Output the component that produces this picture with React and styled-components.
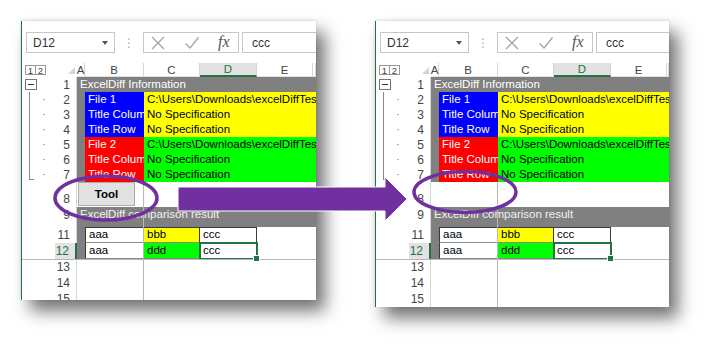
import styled, { createGlobalStyle } from "styled-components";

const GREEN = "#217346";
const PURPLE = "#7030a0";
const GRAY = "#808080";
const COLS = "33px 22px 8px 59px 56px 57px 56px 1fr";

const GlobalStyle = createGlobalStyle`
  body {
    margin: 0;
    background: #fff;
    font-family: "Liberation Sans", Arial, sans-serif;
  }
`;

const Stage = styled.div`
  position: relative;
  width: 711px;
  height: 349px;
  overflow: hidden;
  box-sizing: border-box;
  padding: 21px 0 0 21px;
  display: flex;
  align-items: flex-start;
  gap: 59px;
`;

const Window = styled.div`
  width: ${(p) => p.$w}px;
  height: ${(p) => p.$h}px;
  box-sizing: border-box;
  background: #fff;
  border-left: 1px solid ${GREEN};
  box-shadow: 9px 11px 16px rgba(0, 0, 0, 0.55), 0 -1px 3px rgba(0, 0, 0, 0.12);
  overflow: hidden;
  display: flex;
  flex-direction: column;
  flex-shrink: 0;
`;

/* formula bar */
const FormulaBar = styled.div`
  flex: 0 0 42px;
  height: 42px;
  box-sizing: border-box;
  padding: 11px 0 0 4px;
  display: flex;
  align-items: flex-start;
`;

const Box = styled.div`
  height: 21px;
  box-sizing: border-box;
  border: 1px solid #c6c6c6;
  display: flex;
  align-items: center;
  font-size: 12px;
  color: #333;
`;

const NameBox = styled(Box)`
  width: 89px;
  justify-content: space-between;
  padding: 0 6px;
`;

const Caret = styled.span`
  width: 0;
  height: 0;
  border-left: 3px solid transparent;
  border-right: 3px solid transparent;
  border-top: 4px solid #555;
`;

const Grip = styled.div`
  width: 28px;
  height: 21px;
  display: flex;
  align-items: center;
  justify-content: center;
  color: #aaa;
  font: 12px "DejaVu Sans", sans-serif;
`;

const FxBox = styled(Box)`
  width: 96px;
  padding-left: 6px;
  gap: 18px;
`;

const Fx = styled.span`
  font: italic 16px "Liberation Serif", serif;
  color: #555;
  margin-top: -2px;
`;

const FormulaInput = styled(Box)`
  flex: 1;
  margin-left: 3px;
  padding-left: 9px;
  border-right: none;
`;

/* sheet */
const Sheet = styled.div`
  position: relative;
  flex: 0 0 auto;
`;

const SheetRow = styled.div`
  display: grid;
  grid-template-columns: ${COLS};
  height: ${(p) => p.$h}px;
`;

const ColHead = styled.div`
  display: flex;
  align-items: center;
  justify-content: center;
  font-size: 11.5px;
  color: ${(p) => (p.$active ? GREEN : "#444")};
  background: ${(p) => (p.$active ? "#e2e2e2" : "#fff")};
  box-sizing: border-box;
  border-right: 1px solid #d6d6d6;
  border-bottom: ${(p) => (p.$active ? `2px solid ${GREEN}` : "1px solid #e2e2e2")};
`;

const Corner = styled.div`
  position: relative;
  &::after {
    content: "";
    position: absolute;
    right: 2px;
    bottom: 3px;
    border-left: 7px solid transparent;
    border-bottom: 7px solid #d6d6d6;
  }
`;

const LevelButtons = styled.div`
  display: flex;
  padding: 2px 0 0 3px;
`;

const Level = styled.span`
  width: 11px;
  height: 10px;
  box-sizing: border-box;
  border: 1px solid #999;
  margin-right: -1px;
  display: flex;
  align-items: center;
  justify-content: center;
  font-size: 9.5px;
  color: #444;
`;

const OutlineCell = styled.div`
  position: relative;
  &::before {
    content: "";
    display: ${(p) => (p.$line ? "block" : "none")};
    position: absolute;
    left: 7px;
    top: 0;
    bottom: ${(p) => (p.$end ? 2 : 0)}px;
    width: ${(p) => (p.$end ? 4 : 0)}px;
    border-left: 1px solid #888;
    border-bottom: ${(p) => (p.$end ? "1px solid #888" : "none")};
  }
  &::after {
    content: "${(p) => (p.$dot ? "·" : "")}";
    position: absolute;
    left: 20px;
    top: 1px;
    font-size: 11px;
    color: #777;
  }
`;

const Minus = styled.span`
  position: absolute;
  left: 3px;
  top: 2px;
  width: 12px;
  height: 11px;
  box-sizing: border-box;
  border: 1px solid #777;
  display: flex;
  align-items: center;
  justify-content: center;
  &::before {
    content: "";
    width: 6px;
    height: 1px;
    background: #333;
  }
`;

const RowNum = styled.div`
  display: flex;
  justify-content: flex-end;
  align-items: ${(p) => (p.$bottom ? "flex-end" : "center")};
  padding-right: 6px;
  padding-bottom: ${(p) => (p.$bottom ? 1 : 0)}px;
  box-sizing: border-box;
  overflow: hidden;
  font-size: 12px;
  line-height: 14px;
  color: ${(p) => (p.$active ? GREEN : "#444")};
  background: ${(p) => (p.$active ? "#e2e2e2" : "#fff")};
  border-right: ${(p) => (p.$active ? `2px solid ${GREEN}` : "1px solid #d6d6d6")};
`;

const Cell = styled.div`
  grid-column: ${(p) => p.$col || "auto"};
  background: ${(p) => p.$bg || "transparent"};
  color: ${(p) => p.$fg || "#000"};
  font-size: 11.5px;
  line-height: 1;
  display: flex;
  align-items: ${(p) => (p.$top ? "flex-start" : "center")};
  padding-left: ${(p) => p.$pad ?? 3}px;
  box-sizing: border-box;
  white-space: nowrap;
  overflow: hidden;
  min-width: 0;
`;

const DataCell = styled(Cell)`
  border-right: 1px solid #3a3a3a;
  border-bottom: 1px solid #8a8a8a;
  border-top: ${(p) => (p.$first ? "1px solid #3a3a3a" : "none")};
  border-left: ${(p) => (p.$left ? "1px solid #3a3a3a" : "none")};
`;

const Selected = styled(DataCell)`
  position: relative;
  overflow: visible;
  outline: 2px solid ${GREEN};
  outline-offset: -1px;
  &::after {
    content: "";
    position: absolute;
    z-index: 2;
    right: -4px;
    bottom: -4px;
    width: 5px;
    height: 5px;
    background: ${GREEN};
    border: 1px solid #fff;
  }
`;

const ToolButton = styled.button`
  width: 57px;
  height: 24px;
  margin-left: 1px;
  padding: 0;
  background: #e1e1e1;
  border: 1px solid #adadad;
  font: bold 11.5px "Liberation Sans", Arial, sans-serif;
  color: #000;
`;

const FreezeV = styled.div`
  position: absolute;
  left: 121px;
  top: 119px;
  bottom: 0;
  width: 1px;
  background: #b8b8b8;
`;

const FreezeH = styled.div`
  position: absolute;
  left: 0;
  right: 0;
  top: 196px;
  height: 1px;
  background: #b8b8b8;
`;

const Overlay = styled.svg`
  position: absolute;
  left: 0;
  top: 0;
  pointer-events: none;
`;

const XIcon = () => (
  <svg width="16" height="16" viewBox="0 0 16 16">
    <path d="M2 2 L14 14 M14 2 L2 14" stroke="#a6a6a6" strokeWidth="1.4" fill="none" />
  </svg>
);

const CheckIcon = () => (
  <svg width="16" height="16" viewBox="0 0 16 16">
    <path d="M1.5 8.5 L6 13 L14.5 2.5" stroke="#a6a6a6" strokeWidth="1.4" fill="none" />
  </svg>
);

const path = "C:\\Users\\Downloads\\excelDiffTest\\sample.xlsx";

const infoRows = [
  { n: 2, label: "File 1", value: path, side: "#0000ff", body: "#ffff00" },
  { n: 3, label: "Title Column", value: "No Specification", side: "#0000ff", body: "#ffff00" },
  { n: 4, label: "Title Row", value: "No Specification", side: "#0000ff", body: "#ffff00" },
  { n: 5, label: "File 2", value: path, side: "#ff0000", body: "#00ff00" },
  { n: 6, label: "Title Column", value: "No Specification", side: "#ff0000", body: "#00ff00" },
  { n: 7, label: "Title Row", value: "No Specification", side: "#ff0000", body: "#00ff00" },
];

const ExcelWindow = ({ w, h, showTool }) => (
  <Window $w={w} $h={h}>
    <FormulaBar>
      <NameBox>
        D12
        <Caret />
      </NameBox>
      <Grip>⋮</Grip>
      <FxBox>
        <XIcon />
        <CheckIcon />
        <Fx>fx</Fx>
      </FxBox>
      <FormulaInput>ccc</FormulaInput>
    </FormulaBar>

    <Sheet>
      <SheetRow $h={14}>
        <LevelButtons>
          <Level>1</Level>
          <Level>2</Level>
        </LevelButtons>
        <Corner />
        <ColHead>A</ColHead>
        <ColHead>B</ColHead>
        <ColHead>C</ColHead>
        <ColHead $active>D</ColHead>
        <ColHead>E</ColHead>
        <ColHead />
      </SheetRow>

      <SheetRow $h={15}>
        <OutlineCell>
          <Minus />
        </OutlineCell>
        <RowNum>1</RowNum>
        <Cell $col="3 / -1" $bg={GRAY} $fg="#fff">
          ExcelDiff Information
        </Cell>
      </SheetRow>

      {infoRows.map((r) => (
        <SheetRow $h={15} key={r.n}>
          <OutlineCell $line $dot $end={r.n === 7} />
          <RowNum>{r.n}</RowNum>
          <Cell $bg={GRAY} />
          <Cell $bg={r.side} $fg="#fff">
            {r.label}
          </Cell>
          <Cell $col="5 / -1" $bg={r.body}>
            {r.value}
          </Cell>
        </SheetRow>
      ))}

      <SheetRow $h={25}>
        <OutlineCell />
        <RowNum $bottom>8</RowNum>
        <Cell $col="3 / 5" $pad={0} $top>
          {showTool && <ToolButton>Tool</ToolButton>}
        </Cell>
        <Cell $col="5 / -1" />
      </SheetRow>

      <SheetRow $h={16}>
        <OutlineCell />
        <RowNum>9</RowNum>
        <Cell $col="3 / -1" $bg={GRAY} $fg="#f2f2f2">
          ExcelDiff comparison result
        </Cell>
      </SheetRow>

      <SheetRow $h={4}>
        <OutlineCell />
        <RowNum $bottom>10</RowNum>
        <Cell $col="3 / -1" $bg={GRAY} />
      </SheetRow>

      <SheetRow $h={16}>
        <OutlineCell />
        <RowNum>11</RowNum>
        <Cell $bg={GRAY} />
        <DataCell $first $left $bg="#fff">aaa</DataCell>
        <DataCell $first $bg="#ffff00">bbb</DataCell>
        <DataCell $first $bg="#fff">ccc</DataCell>
        <Cell $col="7 / -1" />
      </SheetRow>

      <SheetRow $h={16}>
        <OutlineCell />
        <RowNum $active>12</RowNum>
        <Cell $bg={GRAY} />
        <DataCell $left $bg="#fff">aaa</DataCell>
        <DataCell $bg="#00ff00">ddd</DataCell>
        <Selected $bg="#fff">ccc</Selected>
        <Cell $col="7 / -1" />
      </SheetRow>

      {[13, 14, 15].map((n) => (
        <SheetRow $h={16} key={n}>
          <OutlineCell />
          <RowNum>{n}</RowNum>
          <Cell $col="3 / -1" />
        </SheetRow>
      ))}

      <FreezeV />
      <FreezeH />
    </Sheet>
  </Window>
);

const App = () => (
  <>
    <GlobalStyle />
    <Stage>
      <ExcelWindow w={295} h={279} showTool />
      <ExcelWindow w={294} h={286} />

      <Overlay width="711" height="349" viewBox="0 0 711 349">
        <polygon
          points="178,187 385,187 385,177 407,199 385,221 385,211 178,211"
          fill={PURPLE}
          stroke="#fff"
          strokeWidth="1"
        />
        <ellipse cx="106" cy="198" rx="51" ry="22" fill="none" stroke={PURPLE} strokeWidth="3.5" />
        <ellipse cx="465" cy="192" rx="51" ry="20.5" fill="none" stroke={PURPLE} strokeWidth="3.5" />
      </Overlay>
    </Stage>
  </>
);

export default App;
